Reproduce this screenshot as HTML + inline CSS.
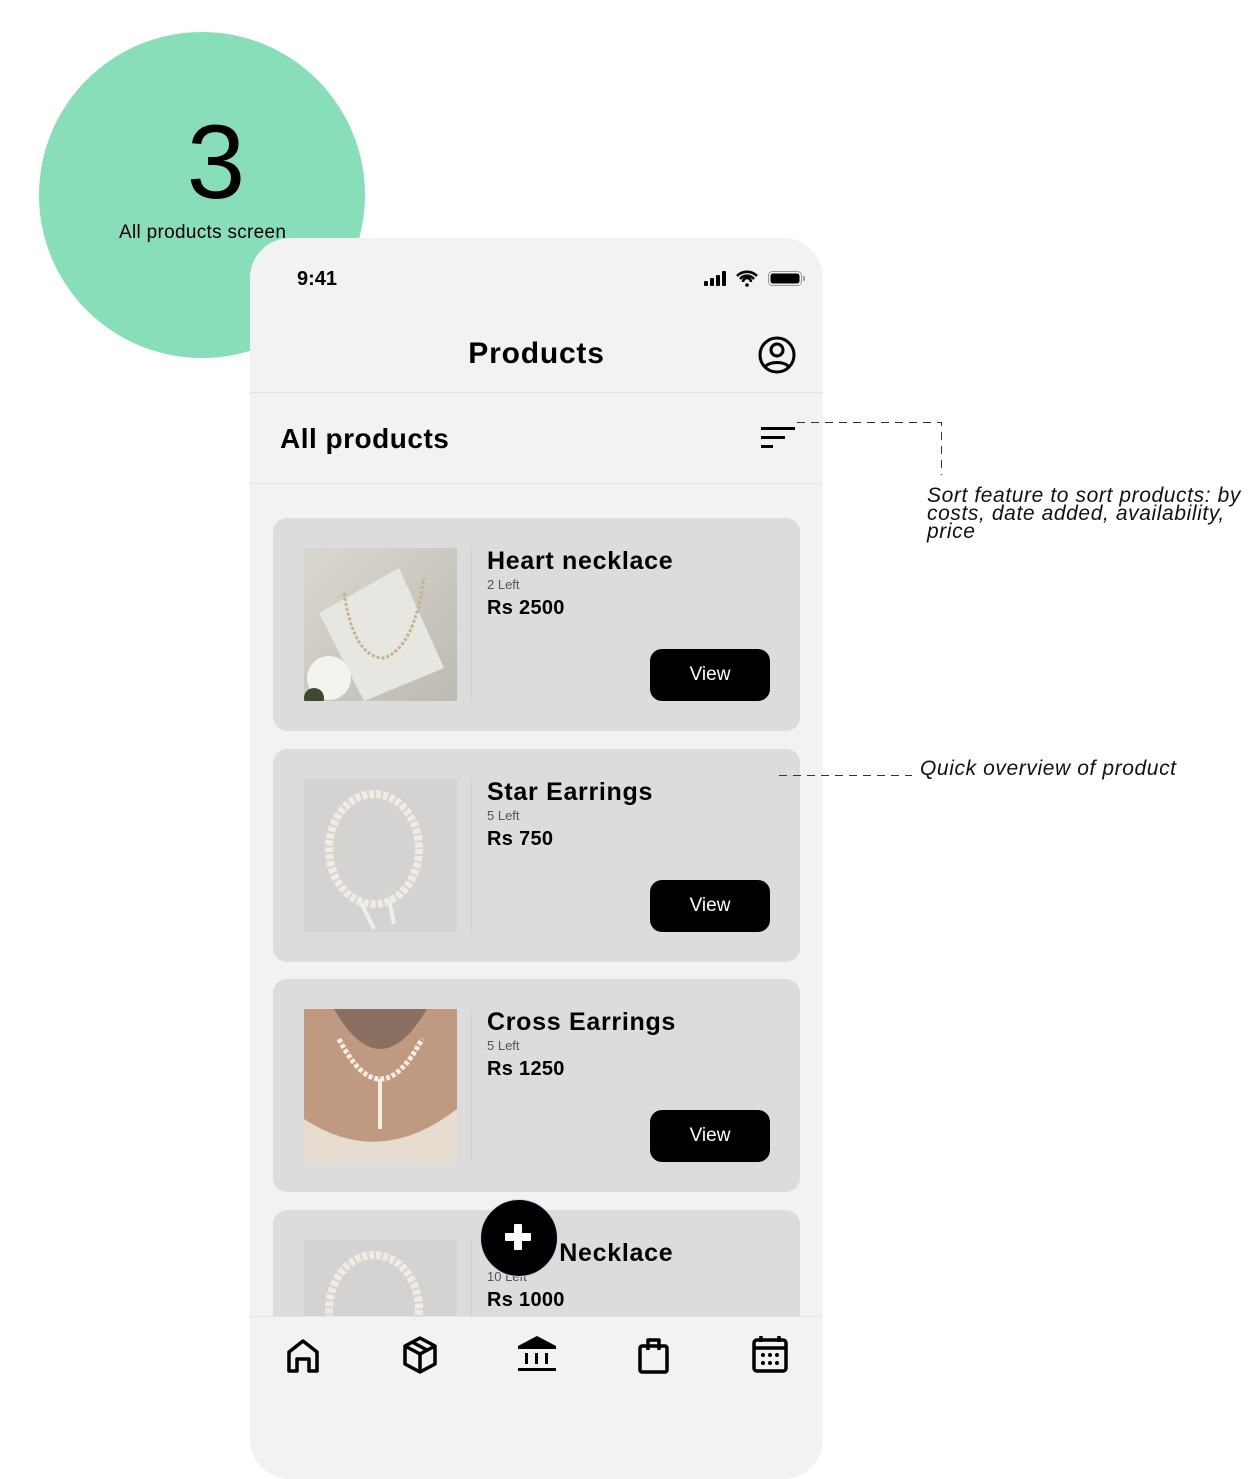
<!DOCTYPE html>
<html><head><meta charset="utf-8">
<style>
*{margin:0;padding:0;box-sizing:border-box}
body{width:1252px;height:1479px;background:#fff;position:relative;overflow:hidden;font-family:"Liberation Sans",sans-serif;color:#000}
.abs{position:absolute}
.circle{left:39px;top:32px;width:326px;height:326px;border-radius:50%;background:#87deb8}
.big3{left:0;width:432px;top:110px;text-align:center;font-size:105px;font-weight:400;line-height:1}
.lbl{left:119px;top:222px;font-size:19px;letter-spacing:0.3px}
.phone{left:250px;top:238px;width:573px;height:1241px;background:#f2f2f2;border-radius:40px 40px 40px 40px;overflow:hidden}
.card{left:23px;width:527px;height:213px;background:#dcdcdc;border-radius:14px}
.img{left:31px;top:30px;width:153px;height:153px}
.div{left:198px;top:30px;width:1px;height:153px;background:#d0d0d0}
.t{left:214px;top:29px;font-size:25px;font-weight:bold;white-space:nowrap;letter-spacing:0.7px}
.left{left:214px;top:59px;font-size:13px;color:#555}
.price{left:214px;top:79px;font-size:20px;font-weight:bold;letter-spacing:0.3px}
.btn{left:377px;top:131px;width:120px;height:52px;background:#000;color:#fff;border-radius:12px;text-align:center;line-height:52px;font-size:19px}
.note{font-style:italic;font-size:21px;color:#111;line-height:18px;letter-spacing:0.6px}
</style></head><body>
<div class="abs circle"></div>
<div class="abs big3">3</div>
<div class="abs lbl">All products screen</div>

<div class="abs phone">
  <div class="abs" style="left:47px;top:30px;font-size:20px;font-weight:bold">9:41</div>
  <svg class="abs" style="left:452px;top:31px" width="104" height="20" viewBox="0 0 104 20">
    <rect x="2" y="12" width="4" height="5" rx="1"/><rect x="8" y="9" width="4" height="8" rx="1"/><rect x="14" y="6" width="4" height="11" rx="1"/><rect x="20" y="2" width="4" height="15" rx="1"/>
    <path d="M35 7a14 14 0 0 1 20 0M38 10a9 9 0 0 1 14 0M41 13a4 4 0 0 1 8 0" stroke="#000" stroke-width="2.6" fill="none"/><circle cx="45" cy="16" r="1.8"/>
    <rect x="66.5" y="2.5" width="33" height="14" rx="4" fill="none" stroke="#999" stroke-width="1"/><rect x="68.5" y="4.5" width="29" height="10" rx="2.5"/><rect x="101" y="7" width="2" height="5" rx="1" fill="#999"/>
  </svg>
  <div class="abs" style="left:0;width:573px;top:99px;text-align:center;font-size:30px;font-weight:bold;letter-spacing:0.8px">Products</div>
  <svg class="abs" style="left:507px;top:97px" width="40" height="40" viewBox="0 0 40 40" fill="none" stroke="#000" stroke-width="3"><circle cx="20" cy="20" r="17"/><circle cx="20" cy="15" r="6"/><path d="M8 32c4-6 20-6 24 0"/></svg>
  <div class="abs" style="left:0;top:154px;width:573px;height:1px;background:#e4e0ee"></div>
  <div class="abs" style="left:30px;top:185px;font-size:28px;font-weight:bold;letter-spacing:0.5px">All products</div>
  <svg class="abs" style="left:510px;top:188px" width="36" height="26"><rect x="1" y="1" width="34" height="3"/><rect x="1" y="10" width="24" height="3"/><rect x="1" y="19" width="12" height="3"/></svg>
  <div class="abs" style="left:0;top:245px;width:573px;height:1px;background:#e4e0ee"></div>

  <div class="abs card" style="top:280px">
    <svg class="abs img" viewBox="0 0 153 153"><defs><linearGradient id="g1" x1="0" y1="0" x2="1" y2="1"><stop offset="0" stop-color="#d9d7d0"/><stop offset="1" stop-color="#bdbab2"/></linearGradient></defs><rect width="153" height="153" fill="url(#g1)"/><polygon points="15,65 95,20 140,120 60,153" fill="#e8e6e0"/><path d="M40 45 Q50 110 80 110 Q110 100 120 30" stroke="#c9b28a" stroke-width="3" fill="none" stroke-dasharray="3 2"/><circle cx="25" cy="130" r="22" fill="#f4f3ee"/><circle cx="10" cy="150" r="10" fill="#3c4a30"/></svg>
    <div class="abs div"></div>
    <div class="abs t">Heart necklace</div><div class="abs left">2 Left</div><div class="abs price">Rs 2500</div>
    <div class="abs btn">View</div>
  </div>
  <div class="abs card" style="top:511px">
    <svg class="abs img" viewBox="0 0 153 153"><rect width="153" height="153" fill="#d5d3d2"/><ellipse cx="70" cy="70" rx="45" ry="55" stroke="#f1ece2" stroke-width="8" fill="none" stroke-dasharray="5 2"/><path d="M55 120 L70 150 M85 120 L90 145" stroke="#eee" stroke-width="4"/></svg>
    <div class="abs div"></div>
    <div class="abs t">Star Earrings</div><div class="abs left">5 Left</div><div class="abs price">Rs 750</div>
    <div class="abs btn">View</div>
  </div>
  <div class="abs card" style="top:741px">
    <svg class="abs img" viewBox="0 0 153 153"><rect width="153" height="153" fill="#8a7060"/><path d="M30 0 Q76 80 123 0 L153 0 L153 153 L0 153 L0 0Z" fill="#c09a80"/><path d="M0 110 Q76 160 153 100 L153 153 L0 153Z" fill="#e6ddd0"/><path d="M35 30 Q76 110 118 30" stroke="#f2eee6" stroke-width="5" fill="none" stroke-dasharray="4 2"/><path d="M76 70 L76 120" stroke="#f2eee6" stroke-width="4"/></svg>
    <div class="abs div"></div>
    <div class="abs t">Cross Earrings</div><div class="abs left">5 Left</div><div class="abs price">Rs 1250</div>
    <div class="abs btn">View</div>
  </div>
  <div class="abs card" style="top:972px">
    <svg class="abs img" viewBox="0 0 153 153"><rect width="153" height="153" fill="#d5d3d2"/><ellipse cx="70" cy="70" rx="45" ry="55" stroke="#f1ece2" stroke-width="8" fill="none" stroke-dasharray="5 2"/></svg>
    <div class="abs div"></div>
    <div class="abs t">Pearl Necklace</div><div class="abs left">10 Left</div><div class="abs price">Rs 1000</div>
  </div>
  <div class="abs" style="left:230px;top:961px;width:78px;height:78px;border-radius:50%;background:#000;border:1px solid #d8d0f0"></div>
  <svg class="abs" style="left:255px;top:986px" width="26" height="26"><rect x="9" y="0" width="8" height="26" rx="1" fill="#fff"/><rect x="0" y="9" width="26" height="8" rx="1" fill="#fff"/></svg>

  <div class="abs" style="left:0;top:1078px;width:573px;height:163px;background:#f2f2f2;border-top:1px solid #e4e0ee"></div>
  <svg class="abs" style="left:36px;top:1100px" width="34" height="36" fill="none" stroke="#000" stroke-width="3.5" stroke-linejoin="round"><path d="M3 33V14L17 3l14 11v19h-8V21h-12v12z"/></svg>
  <svg class="abs" style="left:152px;top:1098px" width="36" height="38" fill="none" stroke="#000" stroke-width="3.5" stroke-linejoin="round"><path d="M18 2L33 10V28L18 36L3 28V10Z M3 10L18 18L33 10 M18 18V36 M10 6L25 14"/></svg>
  <svg class="abs" style="left:267px;top:1097px" width="40" height="38" fill="#000"><path d="M20 1L39 11H1Z"/><rect x="1" y="11" width="38" height="3"/><rect x="8" y="18" width="3" height="11"/><rect x="18" y="18" width="3" height="11"/><rect x="28" y="18" width="3" height="11"/><rect x="1" y="33" width="38" height="3"/></svg>
  <svg class="abs" style="left:387px;top:1098px" width="34" height="38" fill="none" stroke="#000" stroke-width="3.5" stroke-linejoin="round"><rect x="3" y="10" width="27" height="26" rx="2"/><path d="M11 14V4h11v10"/></svg>
  <svg class="abs" style="left:502px;top:1097px" width="36" height="38" fill="none" stroke="#000" stroke-width="3.5"><rect x="2" y="5" width="32" height="31" rx="3"/><path d="M2 13h32M9 1v6M27 1v6"/><g fill="#000" stroke="none"><circle cx="11" cy="20" r="2"/><circle cx="18" cy="20" r="2"/><circle cx="25" cy="20" r="2"/><circle cx="11" cy="28" r="2"/><circle cx="18" cy="28" r="2"/><circle cx="25" cy="28" r="2"/></g></svg>
</div>

<svg class="abs" style="left:0;top:0" width="1252" height="1479"><path d="M797 422.5H941.5V475" stroke="#333" stroke-width="1" fill="none" stroke-dasharray="8 6"/><path d="M779 775.5H912" stroke="#333" stroke-width="1" fill="none" stroke-dasharray="8 6"/></svg>
<div class="abs note" style="left:927px;top:487px;width:325px">Sort feature to sort products: by costs, date added, availability, price</div>
<div class="abs note" style="left:920px;top:760px;white-space:nowrap">Quick overview of product</div>
</body></html>
